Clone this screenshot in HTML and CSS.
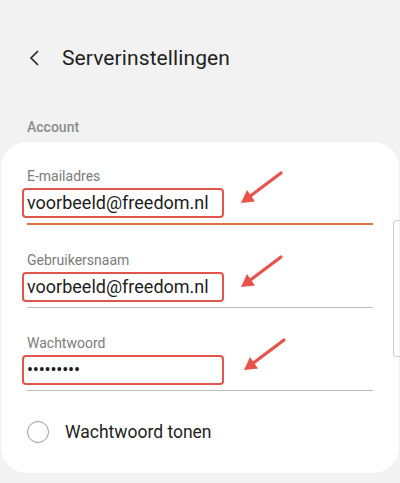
FILE: index.html
```html
<!DOCTYPE html>
<html>
<head>
<meta charset="utf-8">
<link rel="stylesheet" href="styles.css">
</head>
<body>
<header class="topbar">
  <svg class="back" width="12" height="16" viewBox="0 0 12 16"><path d="M9 1 L2 8 L9 15" fill="none" stroke="#222" stroke-width="1.6"/></svg>
  <h1 class="title">Serverinstellingen</h1>
</header>
<div class="section">Account</div>
<main class="card">
  <div class="field">
    <div class="label">E-mailadres</div>
    <div class="box">voorbeeld@freedom.nl</div>
    <div class="line line-active"></div>
    <svg class="arrow" width="56" height="42" viewBox="0 0 56 42"><line x1="47" y1="5" x2="17" y2="27.5" stroke="#e8524a" stroke-width="3.2" stroke-linecap="round"/><polygon points="7,35 21,33.5 13,22" fill="#e8524a"/></svg>
  </div>
  <div class="field">
    <div class="label">Gebruikersnaam</div>
    <div class="box">voorbeeld@freedom.nl</div>
    <div class="line"></div>
    <svg class="arrow" width="56" height="42" viewBox="0 0 56 42"><line x1="47" y1="5" x2="17" y2="27.5" stroke="#e8524a" stroke-width="3.2" stroke-linecap="round"/><polygon points="7,35 21,33.5 13,22" fill="#e8524a"/></svg>
  </div>
  <div class="field">
    <div class="label">Wachtwoord</div>
    <div class="box box-pw">•••••••••</div>
    <div class="line"></div>
    <svg class="arrow arrow-pw" width="56" height="42" viewBox="0 0 56 42"><line x1="47" y1="5" x2="17" y2="27.5" stroke="#e8524a" stroke-width="3.2" stroke-linecap="round"/><polygon points="7,35 21,33.5 13,22" fill="#e8524a"/></svg>
  </div>
  <div class="radio-row">
    <span class="radio"></span>
    <span class="radio-text">Wachtwoord tonen</span>
  </div>
  <div class="scroll"></div>
</main>
</body>
</html>
```

FILE: styles.css
```css
* { box-sizing: border-box; }
html, body { margin: 0; padding: 0; }
body {
  width: 400px;
  height: 483px;
  overflow: hidden;
  background: #f2f2f2;
  font-family: Roboto, "Noto Sans", sans-serif;
}
.topbar {
  display: flex;
  align-items: center;
  height: 40px;
  margin-top: 38px;
  padding-left: 29px;
}
.back { display: block; }
.title {
  margin: 0 0 0 21px;
  font-size: 21px;
  font-weight: 400;
  color: #222;
  letter-spacing: 0.1px;
}
.section {
  margin-top: 40px;
  padding-left: 27px;
  font-size: 14px;
  line-height: 18px;
  font-weight: 500;
  color: #8c8c8c;
}
.card {
  position: relative;
  margin: 6px 1px 0 1px;
  height: 331px;
  background: #fff;
  border-radius: 26px;
  padding: 26px 0 0 26px;
}
.field {
  position: relative;
  display: flex;
  flex-direction: column;
  margin-bottom: 27px;
}
.field:nth-child(3) { margin-bottom: 0; }
.label {
  font-size: 14px;
  line-height: 16px;
  color: #7b7b7b;
}
.box {
  margin: 4px 0 0 -5px;
  width: 202px;
  height: 30px;
  border: 2px solid #e0564c;
  border-radius: 4px;
  padding: 0 3px;
  font-size: 18px;
  line-height: 26px;
  color: #1c1c1c;
}
.box-pw {
  font-size: 18px;
  letter-spacing: -0.2px;
  line-height: 26px;
}
.line {
  margin-top: 5px;
  width: 346px;
  height: 1px;
  background: #bdbdbd;
}
.line-active {
  background: #e0703f;
  height: 1.5px;
}
.arrow {
  position: absolute;
  left: 207px;
  top: 0;
}
.arrow-pw { left: 210px; }
.radio-row {
  display: flex;
  align-items: center;
  margin-top: 30px;
}
.radio {
  width: 22px;
  height: 22px;
  border: 1.5px solid #9a9a9a;
  border-radius: 50%;
}
.radio-text {
  margin-left: 16px;
  font-size: 17.5px;
  color: #222;
}
.scroll {
  position: absolute;
  right: -1px;
  top: 78px;
  width: 7px;
  height: 137px;
  border: 1px solid #cfcfcf;
  border-right: none;
  border-radius: 4px 0 0 4px;
}
```
